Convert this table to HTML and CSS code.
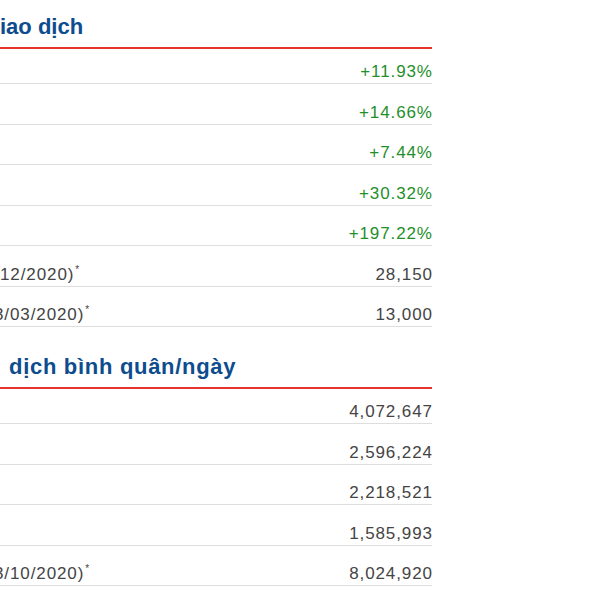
FILE: index.html
```html
<!DOCTYPE html>
<html lang="vi">
<head>
    <meta charset="UTF-8">
    <meta name="viewport" content="width=device-width, initial-scale=1.0">
    <title>Thống kê giao dịch</title>
    <link rel="stylesheet" href="styles.css">
</head>
<body>
    <div class="panel">
        <!-- Thống kê giao dịch -->
        <div class="section">
            <h2 class="title">iao dịch</h2>
            <div class="row"><span class="label"></span><span class="value up">+11.93%</span></div>
            <div class="row"><span class="label"></span><span class="value up">+14.66%</span></div>
            <div class="row"><span class="label"></span><span class="value up">+7.44%</span></div>
            <div class="row"><span class="label"></span><span class="value up">+30.32%</span></div>
            <div class="row"><span class="label"></span><span class="value up">+197.22%</span></div>
            <div class="row"><span class="label">12/2020)<sup>*</sup></span><span class="value">28,150</span></div>
            <div class="row"><span class="label cut">3/03/2020)<sup>*</sup></span><span class="value">13,000</span></div>
        </div>

        <!-- Khối lượng giao dịch bình quân/ngày -->
        <div class="section">
            <h2 class="title title-indent">dịch bình quân/ngày</h2>
            <div class="row"><span class="label"></span><span class="value">4,072,647</span></div>
            <div class="row"><span class="label"></span><span class="value">2,596,224</span></div>
            <div class="row"><span class="label"></span><span class="value">2,218,521</span></div>
            <div class="row"><span class="label"></span><span class="value">1,585,993</span></div>
            <div class="row"><span class="label cut">3/10/2020)<sup>*</sup></span><span class="value">8,024,920</span></div>
        </div>
    </div>
</body>
</html>
```

FILE: styles.css
```css
body {
    margin: 0;
    background-color: #fff;
    font-family: "Liberation Sans", Arial, sans-serif;
}
.panel {
    width: 432px;
}
.section + .section {
    margin-top: 13px;
}
.title {
    margin: 0;
    height: 49px;
    box-sizing: border-box;
    padding-top: 14px;
    border-bottom: 2px solid #e8332c;
    font-size: 22px;
    line-height: 26px;
    font-weight: bold;
    color: #0d4d8e;
    white-space: nowrap;
}
.title-indent {
    padding-left: 9px;
    letter-spacing: 0.7px;
}
/* Dòng số liệu: chữ nằm sát đường kẻ dưới */
.row {
    height: 40.5px;
    box-sizing: border-box;
    display: flex;
    justify-content: space-between;
    align-items: flex-end;
    padding-bottom: 1px;
    border-bottom: 1px solid #dedede;
    font-size: 17px;
    line-height: 20px;
    letter-spacing: 0.9px;
    color: #444;
}
.title + .row {
    height: 35px;
}
.label {
    overflow: hidden;
    white-space: nowrap;
}
.label sup {
    font-size: 10px;
    line-height: 0;
    margin-left: 1px;
}
.cut {
    text-indent: -6px;
}
.value {
    margin-right: -0.9px;
}
.value.up {
    color: #1f8f2a;
}
```
